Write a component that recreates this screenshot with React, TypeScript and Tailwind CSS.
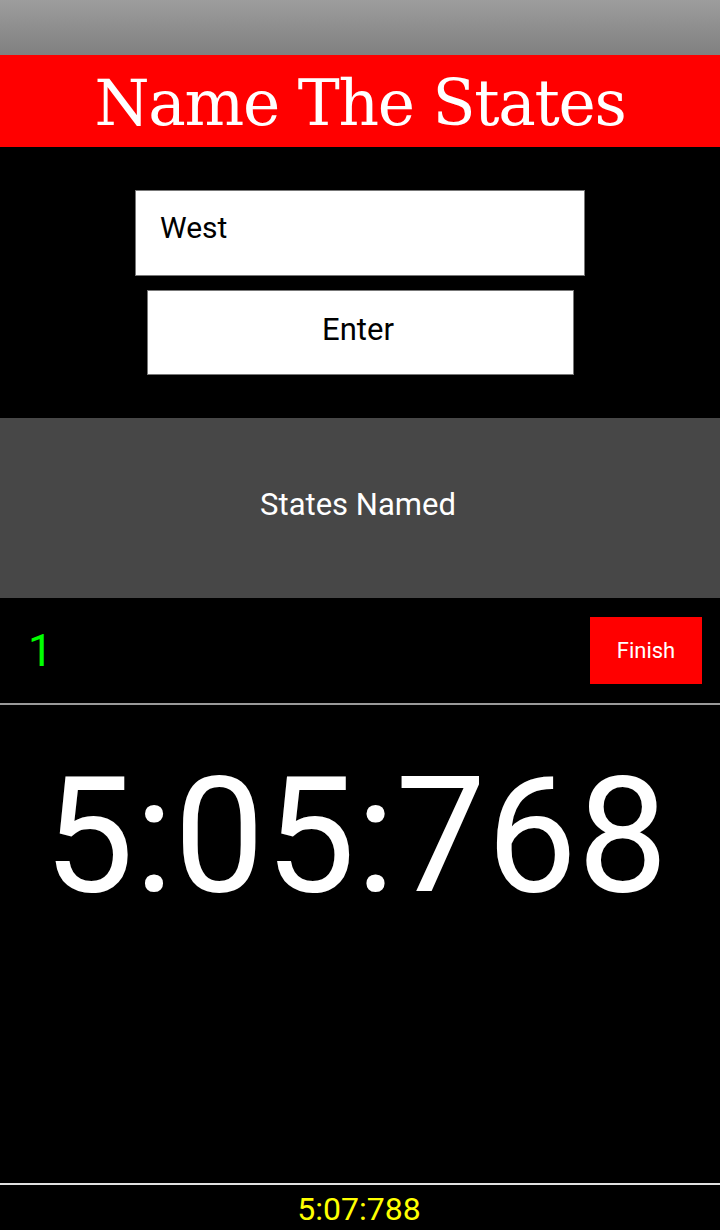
import React from "react"

// Pantalla del juego "Name The States"
export default function App() {
  return (
    <div className="w-[720px] h-[1230px] bg-black flex flex-col font-['Roboto',sans-serif] overflow-hidden">
      {/* barra superior */}
      <div className="h-[55px] bg-gradient-to-b from-[#9d9d9d] to-[#808080]" />

      {/* título */}
      <div className="h-[92px] bg-[#ff0000] flex items-center justify-center">
        <h1 className="text-white text-[63px] leading-none tracking-[-1.3px] font-['DejaVu_Serif',serif] pt-[4px]">
          Name The States
        </h1>
      </div>

      {/* entrada */}
      <div className="flex flex-col items-center pt-[43px] pb-[43px] gap-[14px]">
        <div className="w-[450px] h-[86px] bg-white border border-[#777] flex items-start pl-[24px] pt-[22px]">
          <span className="text-[30px] leading-none text-black">West</span>
        </div>
        <button className="w-[427px] h-[85px] bg-white border border-[#777] text-[31px] leading-none text-black flex items-center justify-center pb-[7px] pr-[4px]">
          Enter
        </button>
      </div>

      {/* lista de estados */}
      <div className="h-[180px] bg-[#474747] flex items-center justify-center">
        <span className="text-white text-[31px] leading-none pb-[8px] pr-[4px]">States Named</span>
      </div>

      {/* contador y botón */}
      <div className="h-[107px] flex items-center justify-between pl-[28px] pr-[18px] border-b-2 border-[#9a9a9a]">
        <span className="text-[#00ff00] text-[44px] leading-none">1</span>
        <button className="w-[112px] h-[67px] bg-[#ff0000] text-white text-[22px] leading-none">
          Finish
        </button>
      </div>

      {/* cronómetro principal */}
      <div className="flex-1 flex justify-center pt-[51px] pr-[8px]">
        <span className="text-white text-[161px] leading-none tracking-[0.5px]">5:05:768</span>
      </div>

      {/* tiempo total */}
      <div className="h-[47px] border-t-2 border-[#e0e0e0] flex items-center justify-center">
        <span className="text-[#ffff00] text-[32px] leading-none pt-[2px] pr-[2px]">5:07:788</span>
      </div>
    </div>
  )
}
